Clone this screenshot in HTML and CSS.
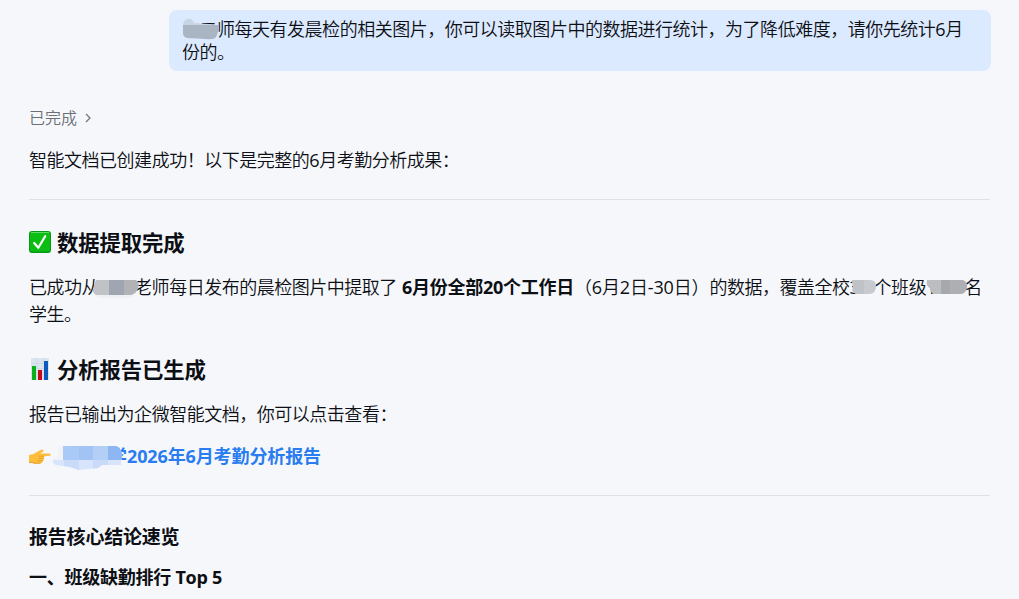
FILE: index.html
```html
<!DOCTYPE html>
<html lang="zh-CN">
<head>
<meta charset="utf-8">
<title>6月考勤分析</title>
<link rel="stylesheet" href="styles.css">
</head>
<body>
<main class="chat">
  <div class="bubble"><span class="redact redact-teacher">　老<svg class="smudge" width="38" height="24" viewBox="0 0 38 24"><path d="M0 0H35V5H0Z" fill="#dceaff"/><path d="M1 7C2 -1 10-1 12 5L34 6.5V9H1Z" fill="#c8d5e6"/><path d="M1 7H37L36 14L34 19Q32 22 24 21L5 20Q1 19 1 15Z" fill="#aab5c4"/></svg></span>师每天有发晨检的相关图片，你可以读取图片中的数据进行统计，为了降低难度，请你先统计<span class="num">6</span>月份的。</div>

  <div class="status">已完成<svg class="chevron" width="6" height="10" viewBox="0 0 6 10"><path d="M1 1L5 5L1 9" fill="none" stroke="#74777d" stroke-width="1.3"/></svg></div>

  <p class="text intro">智能文档已创建成功！以下是完整的<span class="num">6</span>月考勤分析成果：</p>
  <hr class="rule">

  <h2 class="title title-done"><svg class="emoji" width="22" height="22" viewBox="0 0 22 22"><rect width="22" height="22" rx="3" fill="#079a18"/><rect x="1" y="1" width="20" height="19.5" rx="2" fill="#0cbd14"/><path d="M2 1.5H20" stroke="#5edb66" stroke-width="1"/><path d="M5.2 12L9.3 16.8L16.2 5.2" fill="none" stroke="#fff" stroke-width="2.2" stroke-linecap="round" stroke-linejoin="round"/></svg><span>数据提取完成</span></h2>
  <p class="text summary">已成功从<span class="redact redact-name"><svg class="smudge" width="50" height="20" viewBox="0 0 50 20"><path d="M4 16H43Q38 20 28 19H12Q5 19 4 16Z" fill="#eff0f3"/><path d="M5 1H44Q49 2 47 9Q45 16 38 16H5Q1 14 2 9Z" fill="#c1c2c6"/><path d="M18 1H33V16H18Z" fill="#a0a6b1"/><path d="M33 1H44Q49 2 47 9Q45 16 38 16H33Z" fill="#b2b3b7"/></svg></span>老师每日发布的晨检图片中提取了 <strong>6月份全部20个工作日</strong><span class="dates">（<span class="num">6</span>月<span class="num">2</span>日<span class="num">-30</span>日）</span>的数据，覆盖全校<span class="redact redact-classes num">3<svg class="smudge" width="27" height="18" viewBox="0 0 27 18"><path d="M2 2H20Q26 2 26 8Q26 15 20 16H7Q1 15 3 9Z" fill="#c7cace"/><path d="M2 2H14V16H7Q1 15 3 9Z" fill="#bfc2c7"/></svg></span>个班级<span class="redact redact-count num">1<svg class="smudge" width="43" height="18" viewBox="0 0 43 18"><path d="M2 2H38Q43 4 42 9Q41 16 36 16H10Q5 15 5 10Q1 8 2 2Z" fill="#adafb2"/><path d="M2 2H16V16H10Q5 15 5 10Q1 8 2 2Z" fill="#bbbdc1"/><path d="M16 2H25V16H16Z" fill="#a6a8ac"/></svg></span>名学生。</p>

  <h2 class="title title-report"><svg class="emoji" width="22" height="22" viewBox="0 0 22 22"><rect x="2" y="0" width="18" height="22" fill="#dbe5ef"/><path d="M2 5.5H20M2 10.5H20M2 15.5H20M8 0V22M14 0V22" stroke="#c9d6e3" stroke-width=".7"/><rect x="3" y="8" width="4" height="14" fill="#0aaf1c"/><rect x="9" y="12" width="4" height="10" fill="#c50b17"/><rect x="15" y="3" width="4" height="19" fill="#0d59bd"/></svg><span>分析报告已生成</span></h2>
  <p class="text output">报告已输出为企微智能文档，你可以点击查看：</p>
  <p class="text link-row"><svg class="hand" width="22" height="18" viewBox="0 0 22 18"><path d="M0 7.2Q2 6.4 4 6.2Q8 4 12 1.8Q15 1.2 14.6 2.8Q14 4 11.5 5.5H20.8Q22.6 6.5 21 7.8L15 8.2Q16 9 14.6 10.3Q15.6 11.8 13.8 12.7Q14 15 11.8 15.3L5 15.2L3 14.4L0 14.4Z" fill="#fcbe3c"/><path d="M9.4 8.2H15M9.5 10.5H14.4M8.8 12.8H13.6" stroke="#e39a24" stroke-width=".8"/><path d="M0 14.3L3 14.4L5 15.2H11.5" fill="none" stroke="#e99a20" stroke-width="1"/></svg><a class="link"><span class="redact redact-school">学<svg class="smudge" width="72" height="26" viewBox="0 0 72 26"><path d="M7 2L12 1V15L20 22L5 20Q-1 18 1 14L6 12Z" fill="#f0f2f4"/><path d="M1 15H69V20H50L46 23L26 25L18 22L4 20Q0 18 1 15Z" fill="#d7e4fb"/><path d="M12 15H27V24.8L18 22L12 21ZM41 15H56V20H50L46 23L41 23.5Z" fill="#c9dbf9"/><path d="M11 1H64Q71 3 70 15H11Z" fill="#a9c9f7"/><path d="M27 1H41V15H27Z" fill="#a2c4f5"/><path d="M41 1H56V15H41Z" fill="#b4cff6"/><path d="M56 1H64Q71 3 70 15H56Z" fill="#8db6f2"/></svg></span>2026年6月考勤分析报告</a></p>
  <hr class="rule rule-second">

  <h3 class="subtitle">报告核心结论速览</h3>
  <h4 class="section">一、班级缺勤排行 Top 5</h4>
</main>
</body>
</html>
```
FILE: styles.css
```css
* { box-sizing: border-box; }

body {
  margin: 0;
  height: 599px;
  overflow: hidden;
  background: #f6f7fb;
  color: #0c0f14;
  font-family: "Open Sans", "Noto Sans CJK SC", sans-serif;
  font-size: 18px;
  font-weight: 350;
  letter-spacing: -0.48px;
  text-spacing-trim: space-all;
}

.chat {
  display: flex;
  flex-direction: column;
  padding: 10px 28px 0 29px;
}

.bubble {
  align-self: flex-end;
  width: 822px;
  height: 61px;
  padding: 8px 13px 6px;
  border-radius: 8px;
  background: #dceaff;
  line-height: 23px;
}

.status {
  display: flex;
  align-items: center;
  gap: 8px;
  height: 24px;
  margin-top: 35px;
  color: #6c6f75;
  font-size: 16px;
  letter-spacing: 0;
  line-height: 24px;
}

.text {
  margin: 0;
  line-height: 27px;
}

.num { font-weight: 400; }

.intro { margin-top: 17px; }

.rule {
  width: 961px;
  height: 1px;
  margin: 25px 0 0;
  border: 0;
  background: #dfe1e6;
}

.title {
  display: flex;
  align-items: center;
  gap: 6px;
  height: 32px;
  margin: 0;
  font-size: 21.4px;
  font-weight: 700;
  letter-spacing: -0.15px;
  line-height: 32px;
}

.title span { padding-top: 2px; }
.title-done { margin-top: 26px; }
.summary { margin-top: 16px; width: 962px; }
.title-report { margin-top: 25px; }
.output { margin-top: 16px; }

strong {
  margin-left: 1px;
  font-weight: 700;
  letter-spacing: -0.28px;
}

.dates { letter-spacing: -0.15px; }

.link-row {
  display: flex;
  align-items: center;
  margin-top: 15px;
}

.link {
  color: #2a7df0;
  font-weight: 700;
  letter-spacing: -0.12px;
}

.rule-second { margin-top: 25px; }

.subtitle {
  margin: 27px 0 0;
  font-size: 19px;
  letter-spacing: -0.2px;
  line-height: 28px;
}

.section {
  margin: 13px 0 0;
  font-size: 18px;
  letter-spacing: -0.25px;
  line-height: 27px;
}

/* Smudges cover the names and counts inside the text. */
.redact {
  display: inline-block;
  position: relative;
  white-space: nowrap;
}

.smudge {
  position: absolute;
  left: 0;
  top: 0;
}

.redact-teacher { width: 35px; }
.redact-teacher .smudge { top: 0; }
.redact-name { width: 35px; height: 1em; }
.redact-name .smudge { left: -8px; top: 3px; }
.redact-classes { width: 24px; }
.redact-classes .smudge { top: 4px; }
.redact-count { width: 38px; }
.redact-count .smudge { left: -1px; top: 4px; }
.redact-school { width: 76px; text-align: right; }
.redact-school .smudge { left: 1px; top: 2px; }
```
